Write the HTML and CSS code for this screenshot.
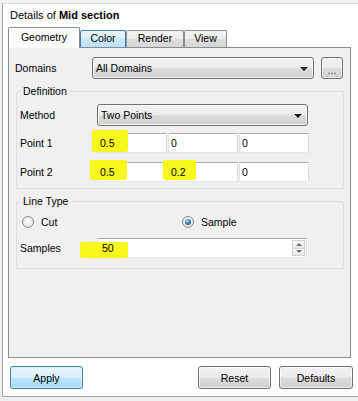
FILE: index.html
```html
<!DOCTYPE html>
<html lang="en">

<head>
    <meta charset="UTF-8">
    <meta name="viewport" content="width=device-width, initial-scale=1.0">
    <title>Details of Mid section</title>
    <link rel="stylesheet" href="styles.css">
</head>

<body>
    <div class="frame">
        <div class="title">Details of <b>Mid section</b></div>

        <div class="tabs">
            <div class="tab active tab-geometry">Geometry</div>
            <div class="tab hover tab-color">Color</div>
            <div class="tab tab-render">Render</div>
            <div class="tab tab-view">View</div>
        </div>

        <div class="page">
            <div class="row">
                <span class="label">Domains</span>
                <div class="combo combo-domains"><span>All Domains</span><i class="arrow"></i></div>
                <button class="btn more">...</button>
            </div>

            <fieldset class="group group-definition">
                <legend>Definition</legend>
                <div class="row row-method">
                    <span class="label">Method</span>
                    <div class="combo combo-method"><span>Two Points</span><i class="arrow"></i></div>
                </div>
                <div class="row row-point row-p1">
                    <span class="label">Point 1</span>
                    <div class="field"><span class="mark mark-p1"></span><span class="val">0.5</span></div>
                    <div class="field"><span class="val">0</span></div>
                    <div class="field"><span class="val">0</span></div>
                </div>
                <div class="row row-point">
                    <span class="label">Point 2</span>
                    <div class="field"><span class="mark mark-p2a"></span><span class="val">0.5</span></div>
                    <div class="field"><span class="mark mark-p2b"></span><span class="val">0.2</span></div>
                    <div class="field"><span class="val">0</span></div>
                </div>
            </fieldset>

            <fieldset class="group group-linetype">
                <legend>Line Type</legend>
                <div class="row radio-row">
                    <div class="radio-item"><span class="radio"></span>Cut</div>
                    <div class="radio-item"><span class="radio checked"></span>Sample</div>
                </div>
                <div class="row row-samples">
                    <span class="label">Samples</span>
                    <div class="spin">
                        <span class="mark mark-s"></span>
                        <span class="val">50</span>
                        <div class="spin-btns"><span class="up"></span><span class="down"></span></div>
                    </div>
                </div>
            </fieldset>
        </div>

        <div class="actions">
            <button class="btn apply">Apply</button>
            <button class="btn reset">Reset</button>
            <button class="btn defaults">Defaults</button>
        </div>
    </div>
</body>

</html>
```

FILE: styles.css
```css
body {
    margin: 0;
    background-color: #f0f0f0;
    font-family: 'Liberation Sans', Arial, sans-serif;
    font-size: 10.5px;
    color: #000;
    overflow: hidden;
}

.frame {
    box-sizing: border-box;
    height: 394px;
    margin: 3px 0 0 2px;
    background-color: #fff;
    border-left: 1px solid #a0a0a0;
    border-top: 1px solid #dadada;
    border-bottom: 1px solid #a0a0a0;
}

.title {
    padding: 5px 0 0 7px;
    font-size: 11px;
    line-height: 12px;
}

/* tabs */
.tabs {
    display: flex;
    align-items: flex-end;
    height: 20px;
    margin: 6px 0 0 5px;
}

.tab {
    box-sizing: border-box;
    height: 17px;
    border: 1px solid #8c8e94;
    border-bottom: none;
    border-radius: 2px 2px 0 0;
    background: linear-gradient(#f5f5f5, #ebebeb 50%, #dedede 51%, #d6d6d6);
    text-align: center;
    line-height: 15px;
}

.tab.active {
    position: relative;
    z-index: 1;
    height: 21px;
    margin-bottom: -1px;
    padding-top: 3px;
    line-height: 12px;
    background: #fcfcfc;
    border-color: #898c95;
}

.tab.hover {
    border-color: #3c7fb1;
    background: linear-gradient(#eaf6fd, #d9effb 50%, #c9e8f9 51%, #bde2f6);
}

.tab-geometry { width: 72px; }
.tab-color { width: 46px; }
.tab-render { width: 58px; }
.tab-view { width: 43px; }

.page {
    box-sizing: border-box;
    width: 343px;
    height: 311px;
    margin-left: 5px;
    padding: 9px 7px 0 6px;
    border: 1px solid #898c95;
    background-color: #f0f0f0;
}

.row {
    display: flex;
    align-items: center;
}

.label {
    flex: none;
    width: 77px;
}

/* combo boxes and buttons */
.combo {
    box-sizing: border-box;
    display: flex;
    align-items: center;
    height: 22px;
    padding: 0 5px 0 3px;
    border: 1px solid #707070;
    border-radius: 3px;
    background: linear-gradient(#f2f2f2, #ebebeb 50%, #dddddd 51%, #cfcfcf);
    box-shadow: inset 0 0 0 1px rgba(255, 255, 255, 0.7);
}

.combo .arrow {
    margin: 2px 0 0 auto;
    width: 0;
    height: 0;
    border-left: 4px solid transparent;
    border-right: 4px solid transparent;
    border-top: 4px solid #1e1e1e;
}

.combo-domains { width: 222px; }
.combo-method { width: 211px; }

.btn {
    box-sizing: border-box;
    width: 73px;
    height: 23px;
    padding: 0;
    font: inherit;
    color: #000;
    border: 1px solid #707070;
    border-radius: 3px;
    background: linear-gradient(#f2f2f2, #ebebeb 50%, #dddddd 51%, #cfcfcf);
    box-shadow: inset 0 0 0 1px rgba(255, 255, 255, 0.7);
}

.btn.more {
    width: 22px;
    height: 22px;
    margin-left: 7px;
    padding-top: 3px;
    color: #333;
}

/* group boxes */
.group {
    min-width: 0;
    margin: 6px -1px 0 1px;
    padding: 7px 0 6px 3px;
    border: 1px solid #d5dfe5;
    border-radius: 3px;
}

.group legend {
    margin-left: 1px;
    padding: 0 2px;
    line-height: 12px;
}

.group-linetype {
    padding-bottom: 10px;
}

.row-method {
    margin-bottom: 7px;
}

.row-p1 {
    margin-bottom: 9px;
}

.field,
.spin {
    position: relative;
    box-sizing: border-box;
    height: 20px;
    background-color: #fff;
    border: 1px solid;
    border-color: #abadb3 #dbdfe6 #e3e9ef #e2e3ea;
    line-height: 18px;
}

.field {
    width: 70px;
    margin-right: 1px;
    padding-left: 2px;
}

.val {
    position: relative;
}

/* highlighter marks */
.mark {
    position: absolute;
    background-color: #f8f81c;
    border-radius: 2px;
}

.mark-p1 { left: -6px; top: -4px; width: 36px; height: 22px; }
.mark-p2a { left: -8px; top: -3px; width: 37px; height: 20px; }
.mark-p2b { left: -6px; top: -3px; width: 33px; height: 20px; }
.mark-s { left: -18px; top: 3px; width: 48px; height: 16px; }

/* radios */
.radio-row {
    height: 16px;
    padding-left: 2px;
}

.radio-item {
    display: flex;
    align-items: center;
    width: 160px;
}

.radio {
    box-sizing: border-box;
    display: flex;
    align-items: center;
    justify-content: center;
    width: 12px;
    height: 12px;
    margin-right: 7px;
    border: 1px solid #8e8f8f;
    border-radius: 50%;
    background: radial-gradient(circle at 50% 40%, #fff, #d8d8d8);
}

.radio.checked::after {
    content: "";
    width: 6px;
    height: 6px;
    border-radius: 50%;
    background: radial-gradient(circle at 40% 35%, #9ddcf8, #2170a6 55%, #0f3c61);
}

/* spin box */
.row-samples {
    margin-top: 8px;
}

.spin {
    display: flex;
    align-items: center;
    width: 210px;
    padding-left: 4px;
}

.spin-btns {
    display: flex;
    flex-direction: column;
    width: 13px;
    height: 16px;
    margin: 0 1px 0 auto;
}

.spin-btns span {
    flex: 1;
    display: flex;
    align-items: center;
    justify-content: center;
    border: 1px solid #cfd2d6;
    background: linear-gradient(#fbfbfb, #e9e9e9);
}

.spin-btns .up {
    border-bottom: none;
}

.spin-btns .up::after,
.spin-btns .down::after {
    content: "";
    width: 0;
    height: 0;
    border-left: 3px solid transparent;
    border-right: 3px solid transparent;
}

.spin-btns .up::after {
    border-bottom: 3px solid #6a6a6a;
}

.spin-btns .down::after {
    border-top: 3px solid #6a6a6a;
}

/* bottom buttons */
.actions {
    display: flex;
    margin-top: 8px;
    padding: 0 5px 0 7px;
}

.btn.apply {
    border-color: #3c7fb1;
    background: linear-gradient(#eaf6fd, #d9f0fc 50%, #bee6fd 51%, #a7d9f5);
    box-shadow: inset 0 0 0 1px rgba(220, 242, 253, 0.8);
}

.btn.reset {
    margin-left: auto;
}

.btn.defaults {
    width: 74px;
    margin-left: 8px;
}
```
